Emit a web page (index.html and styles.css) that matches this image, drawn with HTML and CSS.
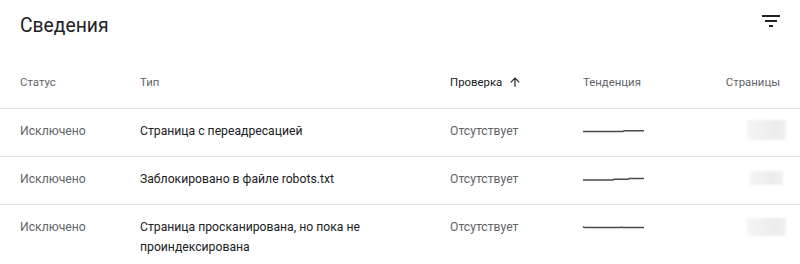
FILE: index.html
```html
<!DOCTYPE html>
<html lang="ru">
<head>
<meta charset="utf-8">
<title>Сведения</title>
<link rel="stylesheet" href="styles.css">
</head>
<body>
<div class="card">
  <div class="card-head">
    <h2 class="title">Сведения</h2>
    <span class="icon-btn" aria-label="Фильтр">
      <svg viewBox="0 0 24 24" width="24" height="24"><path d="M10 18h4v-2h-4v2zM3 6v2h18V6H3zm3 7h12v-2H6v2z" fill="#202124"/></svg>
    </span>
  </div>
  <div class="table">
    <div class="row head">
      <div class="cell">Статус</div>
      <div class="cell type">Тип</div>
      <div class="cell sorted">Проверка
        <svg class="sort" viewBox="0 0 24 24" width="14" height="14"><path d="M4 12l1.41 1.41L11 7.83V20h2V7.83l5.58 5.59L20 12l-8-8-8 8z" fill="#202124"/></svg>
      </div>
      <div class="cell">Тенденция</div>
      <div class="cell num">Страницы</div>
    </div>
    <div class="row">
      <div class="cell status">Исключено</div>
      <div class="cell type">Страница с переадресацией</div>
      <div class="cell check">Отсутствует</div>
      <div class="cell trend"><svg class="spark" viewBox="0 0 62 8" width="62" height="8"><path d="M0 4.5H40L41 3.8H61"/></svg></div>
      <div class="cell num"><span class="blur b1"></span></div>
    </div>
    <div class="row">
      <div class="cell status">Исключено</div>
      <div class="cell type">Заблокировано в файле robots.txt</div>
      <div class="cell check">Отсутствует</div>
      <div class="cell trend"><svg class="spark" viewBox="0 0 62 8" width="62" height="8"><path d="M0 5H30L31 4.3H45L46 3.6H61"/></svg></div>
      <div class="cell num"><span class="blur b2"></span></div>
    </div>
    <div class="row">
      <div class="cell status">Исключено</div>
      <div class="cell type">Страница просканирована, но пока не проиндексирована</div>
      <div class="cell check">Отсутствует</div>
      <div class="cell trend"><svg class="spark" viewBox="0 0 62 8" width="62" height="8"><path d="M0 3.6L1.5 4.6H37.5L38.5 4L39.5 4.6H61"/></svg></div>
      <div class="cell num"><span class="blur b3"></span></div>
    </div>
  </div>
</div>
</body>
</html>
```

FILE: styles.css
```css
* { box-sizing: border-box; }
html, body { margin: 0; background: #fff; }
body {
  font-family: Roboto, "Noto Sans", Arial, sans-serif;
  color: #202124;
  width: 800px;
  height: 264px;
  overflow: hidden;
}
.card-head {
  display: flex;
  justify-content: space-between;
  align-items: flex-start;
  height: 56px;
  padding: 12px 17px 0 20px;
}
.title {
  margin: 0;
  font-size: 19.3px;
  line-height: 28px;
  font-weight: 400;
  color: #202124;
}
.icon-btn {
  display: block;
  width: 24px;
  height: 24px;
  margin-top: -3px;
}
.icon-btn svg { display: block; }
.row {
  display: grid;
  grid-template-columns: 120px 310px 133px 1fr auto;
  align-items: start;
  padding: 12px 20px;
  min-height: 48px;
  border-bottom: 1px solid #e2e2e2;
  font-size: 12.2px;
  line-height: 20px;
}
.row.head {
  padding: 18px 20px;
  min-height: 0;
  font-size: 11.4px;
  line-height: 16px;
  color: #5f6368;
}
.type { padding-right: 40px; color: #202124; }
.row.head .type { color: #5f6368; }
.status, .check { color: #5f6368; }
.sorted {
  color: #202124;
  display: flex;
  align-items: center;
}
.sort { margin-left: 6px; display: block; }
.num { text-align: right; justify-self: end; }
.trend {
  height: 20px;
  display: flex;
  align-items: center;
}
.spark { display: block; overflow: visible; }
.spark path { fill: none; stroke: #4a4a4a; stroke-width: 1.5; }
.blur {
  display: block;
  margin-right: -6px;
  background: linear-gradient(90deg, #f5f5f5, #ececec 70%, #f1f1f1);
  filter: blur(0.8px);
}
.b1 { width: 39px; height: 20px; margin-top: -1px; }
.b2 { width: 34px; height: 14px; margin-top: 2px; margin-right: -3px; }
.b3 { width: 39px; height: 18px; margin-top: 1px; }
```
